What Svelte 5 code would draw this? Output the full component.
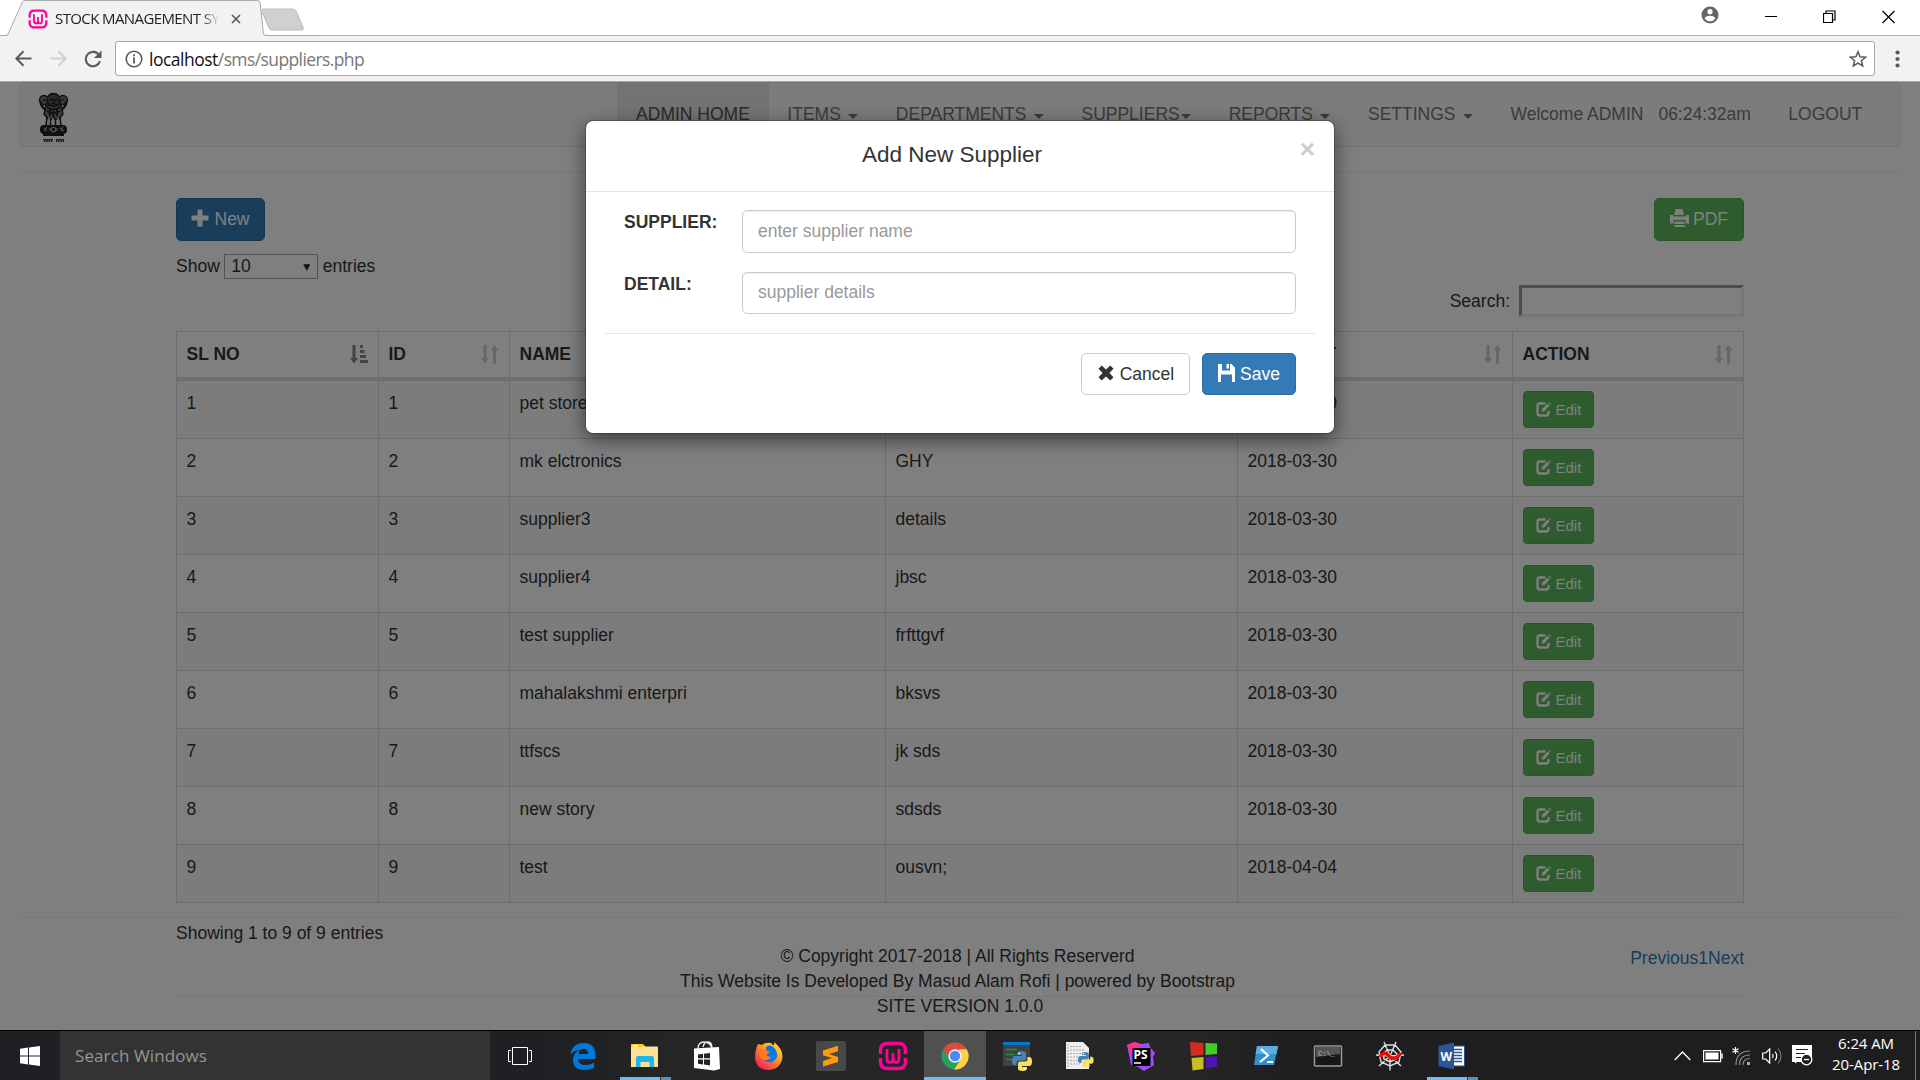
<script>
  const menu = [
    { label: 'ADMIN HOME', active: true },
    { label: 'ITEMS', caret: true },
    { label: 'DEPARTMENTS', caret: true },
    { label: 'SUPPLIERS', caret: true, tight: true },
    { label: 'REPORTS', caret: true },
    { label: 'SETTINGS', caret: true },
    { label: 'Welcome ADMIN', user: true },
    { label: '06:24:32am', clock: true },
    { label: 'LOGOUT' }
  ];
  const columns = ['SL NO', 'ID', 'NAME', 'DETAILS', 'ADDED AT', 'ACTION'];
  const rows = [
    ['pet store', 'GHY', '2018-03-30'],
    ['mk elctronics', 'GHY', '2018-03-30'],
    ['supplier3', 'details', '2018-03-30'],
    ['supplier4', 'jbsc', '2018-03-30'],
    ['test supplier', 'frfttgvf', '2018-03-30'],
    ['mahalakshmi enterpri', 'bksvs', '2018-03-30'],
    ['ttfscs', 'jk sds', '2018-03-30'],
    ['new story', 'sdsds', '2018-03-30'],
    ['test', 'ousvn;', '2018-04-04']
  ];
</script>

{#snippet wamp()}
  <path d="M2.500 13V9.500q0-7 7-7h11q7 0 7 7V13M2.500 17v3.500q0 7 7 7h11q7 0 7-7V17" fill="none" stroke="#f09" stroke-width="3.400" />
  <path d="M9 8v9.500q0 4 3 4t3-4V12v5.500q0 4 3 4t3-4V8" fill="none" stroke="#f09" stroke-width="2.800" />
{/snippet}

{#snippet python(x, y)}
  <g transform="translate({x} {y})">
    <path d="M5 4V2.500Q5 0 9.500 0T14 2.500V7q0 2.500-2.500 2.500H7Q4.500 9.500 4.500 12v2H2.500Q0 14 0 9.500T3 5h7V4Z" fill="#4584b6" />
    <path d="M15 16v1.500q0 2.500-4.500 2.500T6 17.500V13q0-2.500 2.500-2.500H13q2.500 0 2.500-2.500V6h2Q20 6 20 10.500T17 15h-7v1Z" fill="#ffde57" />
    <circle cx="7.300" cy="2.300" r=".9" fill="#fff" /><circle cx="12.700" cy="17.700" r=".9" fill="#fff" />
  </g>
{/snippet}

<div class="screen">
  <div class="tabs">
    <svg class="tabshape" width="320" height="36" viewBox="0 0 320 36">
      <path d="M0 36v-.5H7Q8 35.500 8.500 34L22 2Q22.700.5 24 .5H258Q259.500.5 260 2L263 32Q263.500 35.500 265 35.500H320V36Z" fill="#f2f2f2" stroke="none" />
      <path d="M0 35.500H6.500Q7.500 35.500 8 34L22.500 2Q23.200.5 25 .5H257.500Q259.200.5 260 2L263.300 33Q263.700 35.500 266 35.500H320" fill="none" stroke="#a9a9a9" />
      <path d="M263 9H293Q295 9 296 11L303 27Q304 30 302 30H272Q270 30 269 28L262 12Q261 9 263 9Z" fill="#d0d0d0" stroke="#bcbcbc" />
    </svg>
    <div class="tabcontent">
      <svg width="20" height="20" viewBox="0 0 30 30">{@render wamp()}</svg>
      <span class="tabtitle">STOCK MANAGEMENT SY</span>
      <svg class="tabx" width="10" height="10" viewBox="0 0 10 10"><path d="M1 1 9 9M9 1 1 9" stroke="#5a5a5a" stroke-width="1.700" /></svg>
    </div>
    <div class="window">
      <svg width="18" height="18" viewBox="0 0 18 18"><circle cx="9" cy="9" r="8.500" fill="#666" /><circle cx="9" cy="5.700" r="2.600" fill="#fff" /><path d="M3.700 12.500Q4.500 9.700 9 9.700T14.300 12.500Q12.500 15.200 9 15.200T3.700 12.500Z" fill="#fff" /></svg>
      <svg width="12" height="14" viewBox="0 0 12 14"><path d="M0 6.500H12" stroke="#000" /></svg>
      <svg width="13" height="14" viewBox="0 0 13 14"><path d="M.5 3.500h9v9h-9zM3 3.500V1H12v9H9.500" fill="none" stroke="#000" stroke-width="1.200" /></svg>
      <svg width="13" height="14" viewBox="0 0 13 14"><path d="M.5 1 12.500 13M12.500 1 .5 13" stroke="#000" stroke-width="1.200" /></svg>
    </div>
  </div>
  <div class="toolbar">
    <svg width="17" height="17" viewBox="0 0 17 17"><path d="M16.500 8.500H1.500M8.500 1.200 1.300 8.500l7.200 7.300" fill="none" stroke="#5a5a5a" stroke-width="2" /></svg>
    <svg width="17" height="17" viewBox="0 0 17 17"><path d="M.5 8.500H15.500M8.500 1.200l7.200 7.300-7.200 7.300" fill="none" stroke="#d0d0d0" stroke-width="2" /></svg>
    <svg width="18" height="18" viewBox="0 0 18 18"><path d="M15 5A7.200 7.200 0 1 0 15.900 11.200" fill="none" stroke="#5a5a5a" stroke-width="2.100" /><path d="M17.500.5V8H10Z" fill="#5a5a5a" /></svg>
    <div class="url">
      <svg width="18" height="18" viewBox="0 0 18 18"><circle cx="9" cy="9" r="7.800" fill="none" stroke="#5a5a5a" stroke-width="1.600" /><path d="M9 7.600V13.500M9 4.300V6.200" stroke="#5a5a5a" stroke-width="1.800" /></svg>
      <span class="address"><b>localhost</b>/sms/suppliers.php</span>
      <svg width="18" height="18" viewBox="0 0 18 18"><path d="m9 1.700 2.100 5 5.400.5-4.100 3.500 1.300 5.300L9 13.200 4.300 16l1.300-5.300L1.500 7.200l5.400-.5Z" fill="none" stroke="#5a5a5a" stroke-width="1.500" /></svg>
    </div>
    <svg class="dots" width="5" height="18" viewBox="0 0 5 18"><g fill="#5a5a5a"><circle cx="2.500" cy="2.500" r="2.100" /><circle cx="2.500" cy="9" r="2.100" /><circle cx="2.500" cy="15.500" r="2.100" /></g></svg>
  </div>

  <main class="page">
    <nav class="navbar">
      <svg class="emblem" width="31" height="51" viewBox="0 0 31 51">
        <g fill="#777" stroke="#222" stroke-width="1.400">
          <path d="M8 13h15l2 9-4 5H10l-4-5Z" />
          <circle cx="6" cy="8" r="4.500" /><circle cx="25" cy="8" r="4.500" />
          <path d="M3 9q-1 5 5 9M28 9q1 5-5 9" fill="none" stroke-width="2.500" />
          <circle cx="15.500" cy="8" r="6.500" fill="#555" />
          <path d="M10 4q5-5 11 0M11 9l3-2 2 2 3-2 2 2M12 13l3-2 4 2M5 7l3 2M23 9l3-2" fill="none" />
          <path d="M9 15q6 5 13 0M9 19q6 4 13 0M12 17v7M19 17v7M15.500 19v7" fill="none" stroke-width="2" />
        </g>
        <g stroke="#202020" stroke-width="1.600"><path d="M9 25 8 34M12.500 26v9M17.500 26v9M22 25l1 9" /><path d="M15 26v8M20 26v8M11 26l-1 8" stroke="#ddd" /></g>
        <rect x="2" y="33" width="27" height="9" rx="4" fill="#222" />
        <path d="M5 41.500H26V44H5Z" fill="#222" />
        <g fill="none" stroke="#aaa" stroke-width="1.100"><path d="m6 36 3 3M9 35l-3 4M22 36l4 3M25 35l-2 4" /><circle cx="15.500" cy="37.500" r="2.300" /><path d="M12 36v3M19 36v3" /></g>
        <path d="M5 47.500H15M18 47.500H26" stroke="#333" stroke-width=".9" /><path d="M6 49H15M18 49H26" stroke="#333" stroke-width="2" stroke-dasharray="1.500 .8" />
      </svg>
      <ul>
        {#each menu as item}
          <li class:active={item.active} class:clock={item.clock} class:user={item.user}>
            {item.label}{#if item.caret}<i class="caret" class:tight={item.tight}></i>{/if}
          </li>
        {/each}
      </ul>
    </nav>
    <hr class="top" />
    <section class="content">
      <div class="actions">
        <button class="btn primary"><svg width="18" height="18" viewBox="0 0 18 18"><path d="M6.500.5h5v6h6v5h-6v6h-5v-6h-6v-5h6Z" fill="#fff" /></svg>New</button>
        <button class="btn success"><svg width="19" height="18" viewBox="0 0 19 18"><path d="M5.500 0h7l1.500 6H4ZM0 6h3v1.500h13V6h3v8.500h-3.500V11h-12v3.500H0ZM5 12.500h9l1 2.500H4ZM4 16h11v2H5Z" fill="#fff" /></svg>PDF</button>
      </div>
      <div class="length">Show <span class="select">10<i>▼</i></span> entries</div>
      <div class="filter">Search: <span class="searchbox"></span></div>
      <table>
        <colgroup><col class="c1" /><col class="c2" /><col class="c3" /><col class="c4" /><col class="c5" /><col class="c6" /></colgroup>
        <thead>
          <tr>
            {#each columns as name, i}
              <th><div>{name}
                {#if i === 0}
                  <svg class="sorted" width="18" height="19" viewBox="0 0 18 19"><path d="M2.500 0h3v13h2.500L4 18.500 0 13h2.500ZM10 0h3v3h-3zM10 5h4.500v3H10zM10 10h6v3h-6zM10 15h8v3h-8z" /></svg>
                {:else}
                  <svg width="18" height="19" viewBox="0 0 18 19"><path d="M2.500 0h3v13h2.500L4 18.500 0 13h2.500ZM12 18.500h3v-13h2.500L13.500 0 9.500 5.500h2.500Z" /></svg>
                {/if}
              </div></th>
            {/each}
          </tr>
        </thead>
        <tbody>
          {#each rows as r, i}
            <tr>
              <td>{i + 1}</td><td>{i + 1}</td><td>{r[0]}</td><td>{r[1]}</td><td>{r[2]}</td>
              <td><button class="btn success small"><svg width="15" height="15" viewBox="0 0 15 15"><path d="M9.500 1.500H3.500q-2 0-2 2V11q0 2.500 2 2.500H10q2.500 0 2.500-2.500V9" fill="none" stroke="#fff" stroke-width="2.300" /><path d="m5.500 9.800.8-3L11.600 1.500 13.700 3.600 8.500 9Z M12.500.7l.8-.7L15 1.600l-.7.8Z" fill="#fff" /></svg>Edit</button></td>
            </tr>
          {/each}
        </tbody>
      </table>
    </section>
    <hr class="bottom" />
    <footer>
      <div class="info">Showing 1 to 9 of 9 entries</div>
      <div class="copy">
        <p>© Copyright 2017-2018 | All Rights Reserverd</p>
        <p>This Website Is Developed By Masud Alam Rofi | powered by Bootstrap</p>
        <p class="version">SITE VERSION 1.0.0</p>
      </div>
      <div class="pager"><span>Previous</span><span>1</span><span>Next</span></div>
    </footer>
    <div class="backdrop"></div>
    <div class="modal">
      <header>Add New Supplier<span class="close">×</span></header>
      <div class="field"><label for="s">SUPPLIER:</label><input id="s" placeholder="enter supplier name" /></div>
      <div class="field second"><label for="d">DETAIL:</label><input id="d" placeholder="supplier details" /></div>
      <div class="modalfoot">
        <button class="btn plain"><svg width="16" height="16" viewBox="0 0 16 16"><path d="M3.700.5 8 4.600 12.300.5 15.500 3.700 11.400 8l4.100 4.300-3.200 3.200L8 11.400l-4.300 4.100L.5 12.300 4.600 8 .5 3.700Z" fill="#333" /></svg>Cancel</button>
        <button class="btn primary save"><svg width="17" height="18" viewBox="0 0 17 18"><path d="M0 0h4v6.500h8V0h1.500L17 3.500V18h-3v-7.500H3V18H0ZM8.500 0H11v4.500H8.500Z" fill="#fff" /></svg>Save</button>
      </div>
    </div>
  </main>

  <div class="taskbar">
    <div class="start"><svg width="20" height="20" viewBox="0 0 20 20"><path d="M0 2.700 8 1.500V9.500H0ZM9 1.400 20 0V9.500H9ZM0 10.500H8v8L0 17.300ZM9 10.500H20V20L9 18.600Z" fill="#fff" /></svg></div>
    <div class="search">Search Windows</div>
    <div class="slot"><svg width="30" height="30" viewBox="0 0 30 30"><path d="M6.500 6.500h15v17h-15zM5 9.500H2.500v11H5M23 9.500h2.500v11H23" fill="none" stroke="#fff" /></svg></div>
    <div class="slot"><svg width="30" height="30" viewBox="0 0 30 30"><path d="M2.500 14Q4 2 15.500 2 27.500 2 27.500 15v3H10q.5 6 7.500 6 5 0 8.500-2.500v5.500Q22 29 17 29 5 29 5 19q0-7 7-10.500-7 1-9.500 5.500ZM10.500 13H20q0-5-4.500-5t-5 5Z" fill="#0078d7" /></svg></div>
    <div class="slot open"><svg width="30" height="30" viewBox="0 0 30 30"><path d="M1 4q0-1 1-1h11l2 2.500h12q1 0 1 1V26H1Z" fill="#fce292" /><path d="M1 4q0-1 1-1h11v3H1Z" fill="#ffc51f" /><path d="M3 4h5v1.500H3z" fill="#fff" /><path d="M6 26V17q0-2 2-2h14q2 0 2 2v9h-4.500v-5h-9v5Z" fill="#1cb8ec" /></svg></div>
    <div class="slot"><svg width="30" height="30" viewBox="0 0 30 30"><path d="M6 8Q6 1 12 1t8 6M11 6Q12 1 16 1t4 6" fill="none" stroke="#eee" stroke-width="1.300" /><path d="M2 7.500 27 6l1 22-6 1.500L2 27Z" fill="#fff" /><path d="m6 13.500 5-.7v4.500H6Zm6-.8 6-.8v5.300h-6ZM6 18.500h5v5l-5-.7Zm6 0h6v6l-6-.9Z" fill="#242424" /></svg></div>
    <div class="slot"><svg width="30" height="30" viewBox="0 0 30 30"><defs><linearGradient id="fox" x1="1" x2=".2" y2="1"><stop stop-color="#fff044" /><stop offset=".45" stop-color="#ff9a1f" /><stop offset="1" stop-color="#f01862" /></linearGradient></defs><path d="M17 2q-6-1-9 2L4 3Q1 9 1 17q1 12 14 12 12-1 13.500-13Q29 8 20 1q1 6-3 1Z" fill="url(#fox)" /><path d="M12 6q5-4 9 2 5 7-1 12-5 3-10-1 5 0 7-3-4 0-5-3l3-1-3-3Z" fill="#0878e8" /><path d="M7 7l5 2 4 2-4 3q1 2 5 2-3 5-8 2-6-4-2-11Z" fill="#ff7b1b" /></svg></div>
    <div class="slot"><svg width="30" height="30" viewBox="0 0 30 30"><rect width="30" height="30" rx="2" fill="#484848" /><path d="m7 9.500 15-4.800v5.500l-9 2.900 9 2.900v5L7 25.500V20l9-2.900-9-2.900Z" fill="#ff9b0b" /></svg></div>
    <div class="slot"><svg width="30" height="30" viewBox="0 0 30 30">{@render wamp()}</svg></div>
    <div class="slot current"><svg width="30" height="30" viewBox="0 0 30 30"><circle cx="15" cy="15" r="13.500" fill="#24a05a" /><path d="M3.300 8.200A13.500 13.500 0 0 1 26.700 8.200L15 15 9 18Z" fill="#dc4b3e" /><path d="M26.700 8.200A13.500 13.500 0 0 1 14 28.500L21 18 19 8.200Z" fill="#ffcf46" /><circle cx="15" cy="15" r="6.700" fill="#f5f5f5" /><circle cx="15" cy="15" r="5.200" fill="#4a8af4" /></svg></div>
    <div class="slot"><svg width="30" height="30" viewBox="0 0 30 30"><path d="M1 2h27v23H1z" fill="#3d4245" /><path d="M1 1h27v3H1z" fill="#0078d7" /><path d="M4 8.500h11M4 13.500h9M4 18.500h8" stroke="#2f8c30" stroke-width="1.500" />{@render python(10, 10)}</svg></div>
    <div class="slot"><svg width="30" height="30" viewBox="0 0 30 30"><path d="M2 1h17l6 6v21H2z" fill="#eee" /><path d="M4 3v24M6 5.500h11M6 9h14M6 12.500h12M6 16h9M6 19.500h8M6 23h10" stroke="#aaa" stroke-dasharray="2 1" /><g transform="translate(14 11) scale(.78)">{@render python(0, 0)}</g></svg></div>
    <div class="slot"><svg width="30" height="30" viewBox="0 0 30 30"><path d="M1 4 8 1l7 2 8-1 1 4 5 6-2 4 1 8-10 6-6-4-7-2Z" fill="#9950f4" /><path d="M1 4 8 1l7 2L5 14Z" fill="#fb318c" /><path d="M6.500 7h18v18h-18z" fill="#000" /><path d="M8 22h7" stroke="#fff" stroke-width="1.500" /><text x="7.500" y="17.500" class="psglyph">PS</text></svg></div>
    <div class="slot"><svg width="30" height="30" viewBox="0 0 30 30"><path d="M1 1 14.500 2v12L2 15Z" fill="#d42b20" /><path d="M16.500 2 28 2.500V13l-11.500 1Z" fill="#46c92b" /><path d="M2.500 17 14.500 16v12L3.500 29.500Z" fill="#c7bd27" /><path d="M16.500 16 28 15v10.500L16.500 27.500Z" fill="#5011b5" /></svg></div>
    <div class="slot"><svg width="30" height="30" viewBox="0 0 30 30"><path d="M6 5H27L23 24H3Z" fill="#3290cf" /><path d="M6 5H27L25.500 13H4.500Z" fill="#5cafdd" /><path d="m10 8 7 6.500L9 21M16 21h6" fill="none" stroke="#fff" stroke-width="2.200" /></svg></div>
    <div class="slot"><svg width="30" height="30" viewBox="0 0 30 30"><rect x="1.500" y="5" width="27" height="20" rx="1" fill="#171717" stroke="#999" stroke-width="1.500" /><path d="M3 6h24v7L3 16Z" fill="#555" /><text x="5" y="14.500" class="cmdglyph">C:\_</text></svg></div>
    <div class="slot"><svg width="30" height="30" viewBox="0 0 30 30"><g fill="none" stroke="#ddd" stroke-width="1.400"><path d="M15 15V29.500M15 15 4 25M15 15 26 25M15 15 1 14M15 15 29 14M15 15 9 1M15 15 21 1M10 4h10l6 7-2 10-9 4-9-4-2-10ZM12 9h6l4 4-1 5-6 3-6-3-1-5Z" /></g><path d="M5 16q4-7 9-1t12-3" fill="none" stroke="#f00" stroke-width="3.300" /></svg></div>
    <div class="slot open"><svg width="30" height="30" viewBox="0 0 30 30"><path d="M15 5h12.500v20H15z" fill="#fff" stroke="#2a5699" /><path d="M17 8.500h8M17 11.500h8M17 14.500h8M17 17.500h8M17 20.500h8" stroke="#2a5699" stroke-width="1.300" /><path d="M1.500 5 17 1.500v27L1.500 25Z" fill="#2a5699" /><text x="3.500" y="19.500" textLength="11" class="wordglyph">W</text></svg></div>
    <div class="tray">
      <svg width="17" height="18" viewBox="0 0 17 18"><path d="m.7 13 7.800-8 7.800 8" fill="none" stroke="#fff" stroke-width="1.300" /></svg>
      <svg width="20" height="18" viewBox="0 0 20 18"><path d="M.6 3.600h17v11H.6zM17.600 7h1.500v4h-1.500" fill="none" stroke="#fff" stroke-width="1.200" /><path d="M2.500 5.500h13v7h-13z" fill="#fff" /></svg>
      <svg width="19" height="20" viewBox="0 0 19 20"><path d="M4 19Q4 5 18 5M7.500 19Q7.500 9 18 9M11 19q0-6.500 7-6.500" fill="none" stroke="#8c8c8c" stroke-width="1.200" /><path d="M15 16h3v3h-3z" fill="#aaa" /><path d="M3.500 1v7M.5 2.700l6 3.500M6.500 2.700l-6 3.500" stroke="#fff" stroke-width="1.200" /></svg>
      <svg width="21" height="20" viewBox="0 0 21 20"><path d="M.7 7h3l4-4v14l-4-4h-3Z" fill="none" stroke="#fff" stroke-width="1.200" /><path d="M10.500 8q1.500 2 0 4M13 5.500q3.500 4.500 0 9" fill="none" stroke="#fff" stroke-width="1.200" /><path d="M16 2.500q6 7.500 0 15" fill="none" stroke="#777" stroke-width="1.200" /></svg>
      <svg width="21" height="21" viewBox="0 0 21 21"><path d="M0 0h20v17H5l-2 1.500V17H0Z" fill="#fff" /><path d="M4 4.500h12M4 8.500h9M4 12.500h5" stroke="#222" stroke-width="1.200" /><circle cx="14.500" cy="14.500" r="5.300" fill="#1f2022" stroke="#fff" stroke-width="1.300" /><path d="M12 14.500h5" stroke="#fff" stroke-width="1.300" /></svg>
      <div class="time"><span>6:24 AM</span><span>20-Apr-18</span></div>
      <i class="peek"></i>
    </div>
  </div>
</div>

<style>
  :global(body) { margin: 0; overflow: hidden; }
  .screen { width: 1920px; height: 1080px; display: flex; flex-direction: column; background: #fff; overflow: hidden; }
  .screen, .screen * { box-sizing: border-box; }
  svg { display: block; flex: none; }
  .tabs { height: 36px; flex: none; position: relative; display: flex; justify-content: space-between; border-bottom: 1px solid #b3b3b3; font-family: "Open Sans", sans-serif; }
  .tabshape { position: absolute; left: 0; top: 0; }
  .tabcontent { position: relative; display: flex; align-items: center; padding-left: 28px; height: 38px; width: 250px; }
  .tabtitle { margin: -2px 0 0 7px; width: 170px; white-space: nowrap; font-size: 15px; letter-spacing: -.6px; color: #222; -webkit-mask-image: linear-gradient(90deg, #000 86%, transparent 97%); mask-image: linear-gradient(90deg, #000 86%, transparent 97%); }
  .tabx { margin-left: 6px; }
  .window { display: flex; align-items: center; height: 33px; padding-right: 25px; }
  .window svg:nth-child(1) { margin: -3px 46px 0 0; }
  .window svg:nth-child(2) { margin-right: 46px; }
  .window svg:nth-child(3) { margin-right: 46px; }
  .toolbar { height: 46px; flex: none; background: #f2f2f2; border-bottom: 1px solid #a5a5a5; display: flex; align-items: center; padding: 0 20px 0 15px; }
  .toolbar > svg:nth-child(1) { margin-right: 18px; }
  .toolbar > svg:nth-child(2) { margin-right: 17px; }
  .url { margin: 0 20px 0 13px; flex: 1; height: 35px; background: #fff; border: 1px solid #a8a8a8; border-radius: 3px; display: flex; align-items: center; padding: 0 7px 0 9px; }
  .address { flex: 1; margin-left: 6px; font: 17.500px "Open Sans", sans-serif; letter-spacing: -.6px; color: #777; }
  .address b { font-weight: 400; color: #111; letter-spacing: -.5px; }
  .page { position: relative; height: 948px; flex: none; overflow: hidden; font: 17.500px/25px "Liberation Sans", Arial, sans-serif; color: #333; background: #fff; }
  .navbar { margin: 0 19px; height: 65px; background: #f8f8f8; border: 1px solid #e7e7e7; border-radius: 5px; display: flex; justify-content: space-between; padding: 0 19px 0 18px; }
  .emblem { margin-top: 9px; }
  ul { display: flex; margin: 0; padding: 0; list-style: none; color: #777; }
  li { padding: 19px 18.750px 0; white-space: nowrap; display: flex; height: 63px; }
  li.active { background: #e7e7e7; color: #555; }
  li.user { padding-right: 0; }
  li.clock { padding-left: 15px; }
  .caret { width: 0; height: 0; border: 5px solid transparent; border-top-color: #777; border-bottom: 0; margin: 12px 0 0 7.500px; }
  .caret.tight { margin-left: 1.500px; }
  hr { border: 0; border-top: 1px solid #eee; margin: 0 19px; }
  hr.top { margin-top: 25px; margin-bottom: 25px; }
  .content { width: 1568px; margin: 0 176px; }
  .actions { display: flex; justify-content: space-between; height: 43px; }
  .btn { font: 17.500px/25px "Liberation Sans", Arial, sans-serif; height: 43px; border: 1px solid; border-radius: 5px; padding: 0 15px; display: flex; align-items: center; gap: 6px; color: #fff; }
  .btn svg { margin-top: -3px; }
  .primary { background: #337ab7; border-color: #2e6da4; padding: 0 14.500px 0 14px; gap: 5.500px; }
  .success { background: #5cb85c; border-color: #4cae4c; gap: 4px; }
  .plain { background: #fff; border-color: #ccc; color: #333; padding: 0 15px 0 16px; }
  .small { height: 37px; font-size: 15px; border-radius: 4px; padding: 0 12px; gap: 5px; }
  .small svg { margin-top: -1px; }
  .length { display: flex; align-items: center; height: 25px; margin-top: 13px; gap: 4.500px; }
  .select { display: flex; justify-content: space-between; align-items: center; width: 94px; height: 25px; border: 1px solid #a9a9a9; padding: 0 7px 0 6px; }
  .select i { font: 9px "DejaVu Sans", sans-serif; color: #222; }
  .filter { display: flex; justify-content: flex-end; align-items: center; height: 32px; margin: 6px 0 14px; gap: 9px; }
  .searchbox { width: 225px; height: 32px; border: 3px solid; border-color: #999 #eee #eee #999; }
  table { width: 1568px; table-layout: fixed; border-collapse: separate; border-spacing: 0; border-right: 1px solid #ddd; }
  .c1 { width: 202px; } .c2 { width: 131px; } .c3 { width: 376px; } .c4 { width: 352px; } .c5 { width: 275px; }
  th, td { text-align: left; vertical-align: top; padding: 10px 10px 0 9.500px; border-left: 1px solid #ddd; border-bottom: 1px solid #ddd; }
  th { height: 50px; border-top: 1px solid #ddd; border-bottom: 4px solid #ddd; }
  th div { display: flex; justify-content: space-between; }
  th svg { margin-top: 3px; fill: #ccc; }
  th .sorted { fill: #888; }
  td { height: 58px; }
  tbody tr:nth-child(odd) td { background: #f9f9f9; }
  hr.bottom { margin-top: 14px; }
  footer { position: relative; width: 1568px; margin: 0 176px; display: grid; grid-template-columns: 1fr auto 1fr; }
  footer::after { content: ""; position: absolute; left: 0; right: 0; top: 78px; border-top: 1px solid #eee; }
  .info { padding-top: 3px; }
  .copy { padding-top: 26px; text-align: center; }
  .copy p { margin: 0 5px 0 0; }
  .copy p.version { margin: 0; }
  .pager { padding-top: 28px; display: flex; justify-content: flex-end; color: #337ab7; }
  .backdrop { position: absolute; inset: 0; background: rgba(0, 0, 0, .5); }
  .modal { position: absolute; left: 585px; top: 38px; width: 750px; height: 314px; background: #fff; border: 1px solid rgba(0, 0, 0, .2); background-clip: padding-box; border-radius: 8px; box-shadow: 0 6px 19px rgba(0, 0, 0, .5); }
  header { height: 71px; border-bottom: 1px solid #e5e5e5; text-align: center; font-size: 22.500px; line-height: 68px; padding-right: 16px; }
  .close { position: absolute; right: 19px; top: 15px; font-size: 26px; line-height: 26px; font-weight: 700; color: #ccc; }
  .field { display: flex; margin-top: 18px; padding: 0 38px; }
  .field.second { margin-top: 19px; }
  .second input { height: 42px; padding-bottom: 2px; }
  label { width: 118px; font-weight: 700; }
  input { flex: 1; min-width: 0; height: 43px; border: 1px solid #ccc; border-radius: 5px; padding: 0 15px; font: 17.500px "Liberation Sans", Arial, sans-serif; box-shadow: inset 0 1px 1px rgba(0, 0, 0, .075); }
  input::placeholder { color: #999; opacity: 1; }
  .modalfoot { margin: 19px 19px 0; border-top: 1px solid #e5e5e5; padding: 19px 19px 0; display: flex; justify-content: flex-end; gap: 12px; }
  .modalfoot .btn { height: 42px; }
  .modalfoot .save { padding: 0 15px; gap: 5px; }
  .taskbar { height: 50px; flex: none; border-top: 1px solid #000; background: linear-gradient(90deg, #1e2023 0 550px, #262626 700px 1190px, #1e1e21 1300px); display: flex; font-family: "Open Sans", sans-serif; }
  .start { width: 60px; display: flex; align-items: center; justify-content: center; }
  .search { width: 430px; background: #333; color: #969696; font-size: 17px; letter-spacing: .1px; padding-left: 15px; line-height: 49px; }
  .slot { position: relative; width: 62.060px; display: flex; align-items: center; justify-content: center; }
  .slot.current { background: #505050; box-shadow: inset 0 -3px #76b9ed; }
  .slot.open::after { content: ""; position: absolute; left: 6px; bottom: 0; width: 51px; height: 3px; background: linear-gradient(90deg, #76b9ed 40px, #333 40px 41px, #5b8fb8 41px); }
  .psglyph { font: 700 12px "Open Sans", sans-serif; fill: #fff; }
  .cmdglyph { font: 7px "Liberation Mono", monospace; fill: #bbb; }
  .wordglyph { font: 700 12px "Open Sans", sans-serif; fill: #fff; }
  .tray { flex: 1; display: flex; align-items: center; justify-content: flex-end; }
  .tray svg:nth-of-type(1) { margin-right: 12px; }
  .tray svg:nth-of-type(2) { margin-right: 9px; }
  .tray svg:nth-of-type(3) { margin-right: 11px; }
  .tray svg:nth-of-type(4) { margin-right: 9px; }
  .time { display: flex; flex-direction: column; align-items: center; justify-content: center; width: 72px; margin: -4px 13px 0 17px; font-size: 15px; line-height: 21px; letter-spacing: -.1px; color: #fff; white-space: nowrap; }
  .peek { height: 50px; border-left: 1px solid #777; width: 5px; }
</style>
